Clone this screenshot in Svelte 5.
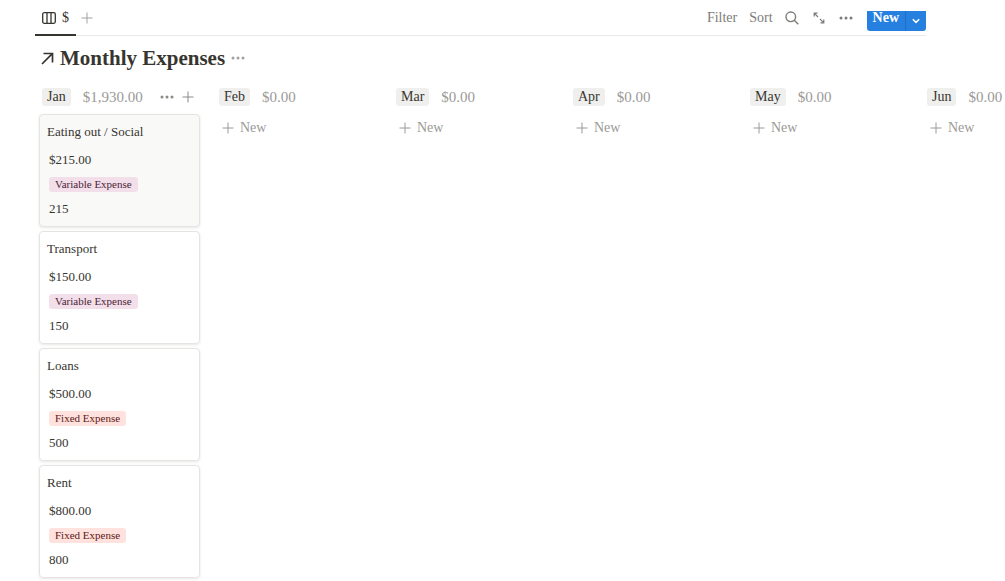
<script lang="ts">
	interface Card {
		title: string;
		amount: number;
		type: 'Variable' | 'Fixed';
	}

	interface Column {
		month: string;
		cards: Card[];
		total: number;
	}

	let columns: Column[] = $state([
		{
			month: 'Jan',
			total: 1930,
			cards: [
				{ title: 'Eating out / Social', amount: 215, type: 'Variable' },
				{ title: 'Transport', amount: 150, type: 'Variable' },
				{ title: 'Loans', amount: 500, type: 'Fixed' },
				{ title: 'Rent', amount: 800, type: 'Fixed' }
			]
		},
		{ month: 'Feb', total: 0, cards: [] },
		{ month: 'Mar', total: 0, cards: [] },
		{ month: 'Apr', total: 0, cards: [] },
		{ month: 'May', total: 0, cards: [] },
		{ month: 'Jun', total: 0, cards: [] }
	]);

	let selected = $state('Eating out / Social');

	function money(value: number) {
		return value.toLocaleString('en-US', { style: 'currency', currency: 'USD' });
	}
</script>

{#snippet plus()}
	<svg class="plus" viewBox="0 0 12 12" aria-hidden="true">
		<path d="M6 .5v11M.5 6h11" />
	</svg>
{/snippet}

{#snippet dots()}
	<svg class="dots" viewBox="0 0 14 4" aria-hidden="true">
		<circle cx="2" cy="2" r="1.5" />
		<circle cx="7" cy="2" r="1.5" />
		<circle cx="12" cy="2" r="1.5" />
	</svg>
{/snippet}

<main>
	<header class="toolbar">
		<div class="tabs">
			<button class="tab">
				<svg class="board-icon" viewBox="0 0 14 12" aria-hidden="true">
					<rect x=".7" y=".7" width="12.6" height="10.6" rx="1.5" />
					<path d="M5 1v10M9 1v10" />
				</svg>
				$
			</button>
			<button class="icon muted" aria-label="Add view">{@render plus()}</button>
		</div>
		<div class="actions">
			<button>Filter</button>
			<button>Sort</button>
			<button class="icon" aria-label="Search">
				<svg class="search" viewBox="0 0 14 14" aria-hidden="true">
					<circle cx="5.8" cy="5.8" r="4.8" />
					<path d="M9.3 9.3L13.3 13.3" />
				</svg>
			</button>
			<button class="icon" aria-label="Expand">
				<svg class="expand" viewBox="0 0 12 12" aria-hidden="true">
					<path d="M4.5 1.2H1.2v3.3M1.2 1.2L5 5M7.5 10.8h3.3V7.5M10.8 10.8L7 7" />
				</svg>
			</button>
			<button class="icon" aria-label="More">{@render dots()}</button>
			<div class="new-group">
				<button class="new">New</button>
				<button class="new-menu" aria-label="New options">
					<svg viewBox="0 0 8 6" aria-hidden="true"><path d="M.8 1.2L4 4.4l3.2-3.2" /></svg>
				</button>
			</div>
		</div>
	</header>

	<div class="heading">
		<svg class="arrow" viewBox="0 0 13 13" aria-hidden="true">
			<path d="M2.5 1.5h9v9M11.3 1.7L1 12" />
		</svg>
		<h1>Monthly Expenses</h1>
		<button class="icon muted" aria-label="Database options">{@render dots()}</button>
	</div>

	<div class="board">
		{#each columns as column (column.month)}
			<section class="column">
				<div class="column-header">
					<h2>{column.month}</h2>
					<span class="total">{money(column.total)}</span>
					{#if column.cards.length > 0}
						<div class="column-actions">
							<button class="icon" aria-label="Column options">{@render dots()}</button>
							<button class="icon" aria-label="Add card">{@render plus()}</button>
						</div>
					{/if}
				</div>

				{#each column.cards as card (card.title)}
					<article class="card" class:selected={selected === card.title}>
						<h3>{card.title}</h3>
						<p>{money(card.amount)}</p>
						<span class="tag" class:fixed={card.type === 'Fixed'}>{card.type} Expense</span>
						<p>{card.amount}</p>
					</article>
				{:else}
					<button class="add">{@render plus()} New</button>
				{/each}
			</section>
		{/each}
	</div>
</main>

<style>
	:global(body) {
		margin: 0;
		background: #fff;
	}

	main {
		overflow: hidden;
		color: #37352f;
		font-family: 'Liberation Serif', serif;
		font-size: 14px;
		line-height: 18px;
	}

	h1,
	h2,
	h3,
	p {
		margin: 0;
	}

	button {
		padding: 0;
		border: 0;
		background: none;
		color: inherit;
		font: inherit;
		cursor: pointer;
	}

	svg {
		display: block;
		flex: none;
		fill: none;
		stroke: currentColor;
	}

	.icon {
		display: flex;
		align-items: center;
	}

	.plus {
		width: 12px;
		height: 12px;
	}

	.dots {
		width: 14px;
		height: 4px;
		fill: currentColor;
		stroke: none;
	}

	.muted {
		color: #a3a29e;
	}

	.toolbar {
		display: flex;
		justify-content: space-between;
		height: 35px;
		margin: 0 79px 0 35px;
		border-bottom: 1px solid #e9e9e8;
	}

	.tabs {
		display: flex;
		gap: 5px;
	}

	.tab {
		display: flex;
		align-items: center;
		gap: 6px;
		height: 36px;
		padding: 2px 7px 0;
		border-bottom: 2px solid #37352f;
	}

	.board-icon {
		width: 14px;
		height: 12px;
		stroke-width: 1.3;
	}

	.actions {
		display: flex;
		align-items: center;
		gap: 12px;
		color: #7d7c78;
	}

	.search {
		width: 14px;
		height: 14px;
		stroke-width: 1.4;
	}

	.expand {
		width: 12px;
		height: 12px;
		margin: 0 2px;
		stroke-width: 1.2;
	}

	.new-group {
		display: flex;
		align-self: flex-start;
		height: 20px;
		margin: 11px 0 0 2px;
		overflow: hidden;
		border-radius: 0 0 3px 3px;
		background: #2680df;
		color: #fff;
	}

	.new {
		padding: 0 6px 6px;
		font-weight: bold;
		line-height: 14px;
	}

	.new-menu {
		display: flex;
		align-items: center;
		justify-content: center;
		width: 21px;
		border-left: 1px solid #1f6fc6;
	}

	.new-menu svg {
		width: 8px;
		height: 6px;
		stroke-width: 1.5;
	}

	.heading {
		display: flex;
		align-items: center;
		gap: 6px;
		padding: 8px 41px 0;
	}

	.arrow {
		width: 13px;
		height: 13px;
		stroke-width: 1.7;
	}

	h1 {
		font-size: 21px;
		line-height: 28px;
	}

	.board {
		display: flex;
		gap: 16px;
		padding: 16px 39px 8px;
	}

	.column {
		display: flex;
		flex: 0 0 161px;
		flex-direction: column;
		gap: 4px;
	}

	.column-header {
		display: flex;
		align-items: center;
		height: 18px;
		padding: 0 6px 0 3px;
		margin-bottom: 4px;
	}

	h2 {
		padding: 0 5px;
		margin-right: 12px;
		border-radius: 3px;
		background: #efefee;
		font-size: 14px;
		font-weight: normal;
	}

	.total,
	.add {
		color: #9b9a97;
	}

	.total {
		font-size: 15px;
	}

	.column-actions {
		display: flex;
		gap: 8px;
		margin-left: auto;
		color: #8b8a87;
	}

	.add {
		display: flex;
		align-items: center;
		gap: 6px;
		height: 28px;
		padding-left: 6px;
	}

	.card {
		display: flex;
		flex-direction: column;
		align-items: flex-start;
		padding: 8px 9px;
		border: 1px solid #e4e4e3;
		border-radius: 4px;
		box-shadow: 0 1px 3px #e7e7e6;
		font-size: 13px;
		line-height: 18px;
	}

	.card.selected {
		background: #f9f9f8;
	}

	h3 {
		margin: 0 0 10px -2px;
		font-size: 13px;
		font-weight: normal;
	}

	.tag {
		padding: 0 6px;
		margin: 8px 0;
		border-radius: 3px;
		background: #f3dfe9;
		color: #4c2337;
		font-size: 11px;
		line-height: 15px;
	}

	.tag.fixed {
		background: #ffe1dd;
		color: #5d1715;
	}
</style>
